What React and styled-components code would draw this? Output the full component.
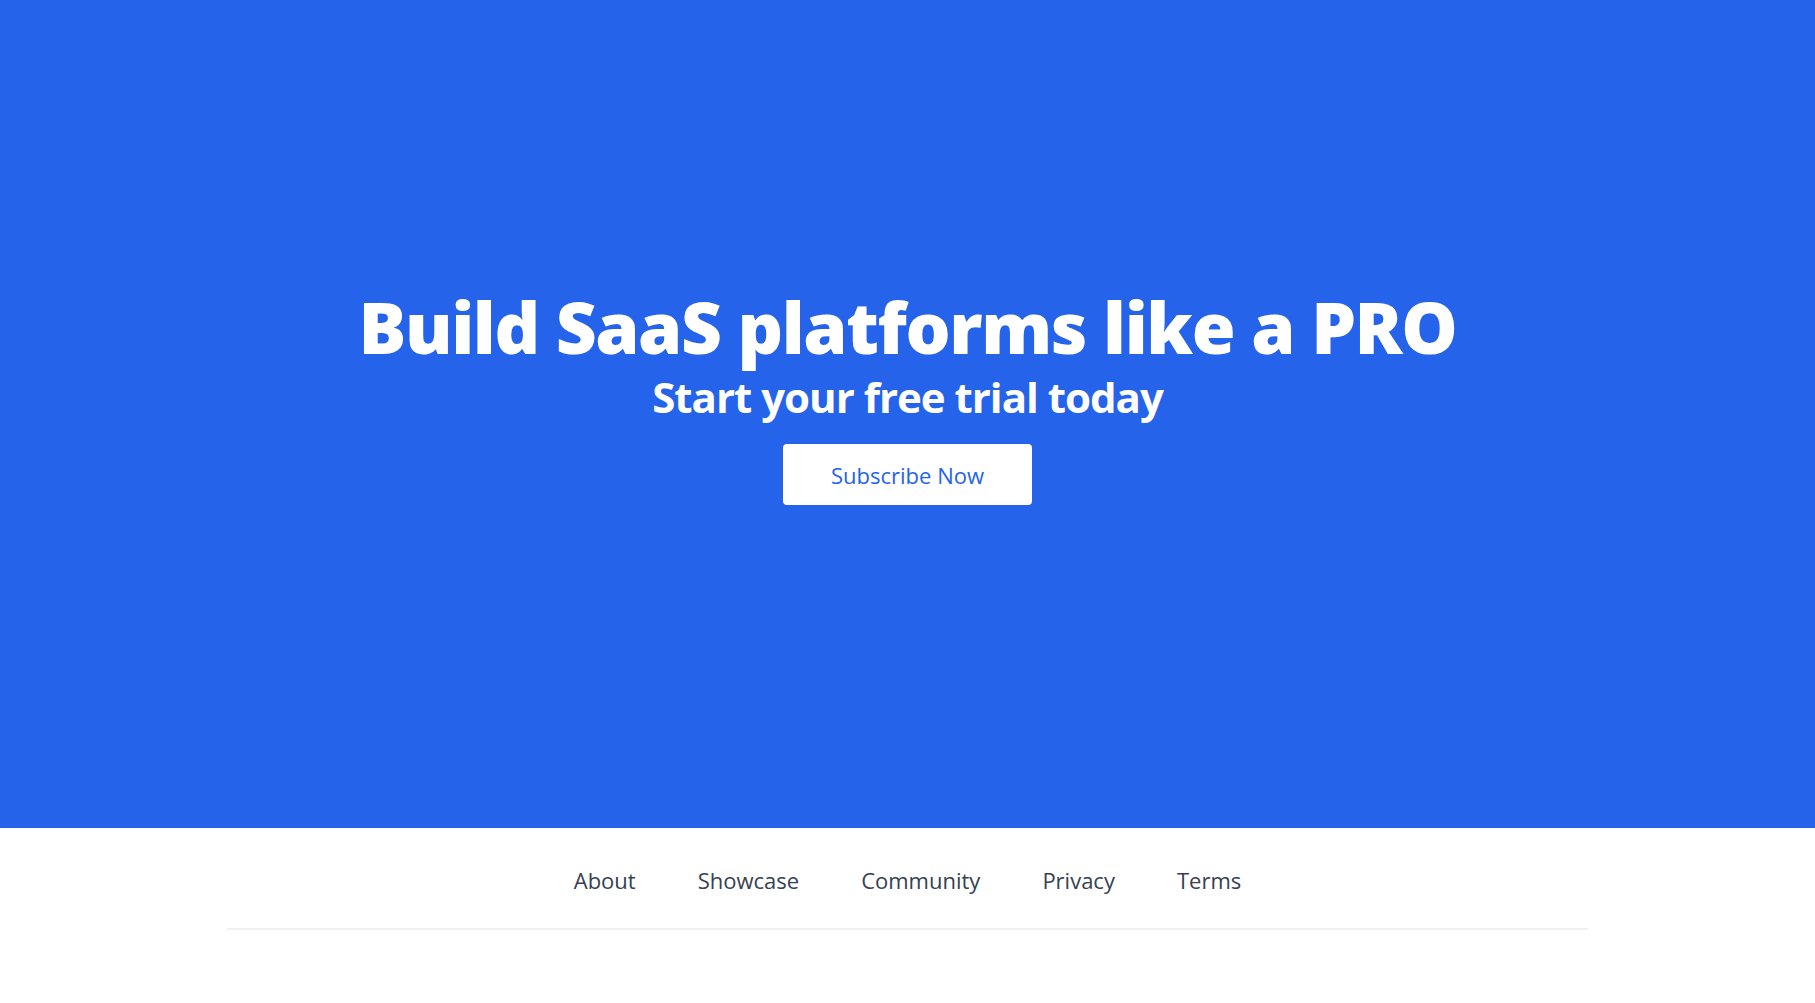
import React from "react";
import styled, { createGlobalStyle } from "styled-components";

const Global = createGlobalStyle`
  html, body { margin: 0; padding: 0; background: #ffffff; }
  body { font-family: "Open Sans", "Noto Sans", "Liberation Sans", sans-serif; }
  * { box-sizing: border-box; }
`;

const Page = styled.div`
  display: flex;
  flex-direction: column;
  min-height: 1003px;
`;

const Hero = styled.section`
  height: 828px;
  background: #2563eb;
  display: flex;
  flex-direction: column;
  align-items: center;
  justify-content: center;
  padding-bottom: 32px;
`;

const Title = styled.h1`
  margin: 0;
  font-size: 71px;
  line-height: 1;
  font-weight: 800;
  color: #ffffff;
  letter-spacing: -1.4px;
`;

const Subtitle = styled.h2`
  margin: 14px 0 0;
  font-size: 42px;
  line-height: 1;
  font-weight: 700;
  color: #ffffff;
  letter-spacing: -1px;
`;

const CTA = styled.button`
  margin-top: 26px;
  height: 61px;
  padding: 0 48px;
  border: none;
  border-radius: 4px;
  background: #ffffff;
  color: #2563eb;
  font-family: inherit;
  font-size: 22px;
  font-weight: 400;
  cursor: pointer;
`;

const Footer = styled.footer`
  background: #ffffff;
`;

const FooterInner = styled.div`
  width: 75%;
  margin: 0 auto;
  border-bottom: 2px solid #eef0f3;
  padding: 34px 0 30px;
`;

const Links = styled.nav`
  display: flex;
  justify-content: center;
  gap: 62px;
`;

const LinkItem = styled.a`
  font-size: 22px;
  line-height: 36px;
  color: #374151;
  text-decoration: none;
`;

export default function App() {
  return (
    <Page>
      <Global />
      <Hero>
        <Title>Build SaaS platforms like a PRO</Title>
        <Subtitle>Start your free trial today</Subtitle>
        <CTA>Subscribe Now</CTA>
      </Hero>
      <Footer>
        <FooterInner>
          <Links>
            {["About", "Showcase", "Community", "Privacy", "Terms"].map((l) => (
              <LinkItem key={l} href="#">{l}</LinkItem>
            ))}
          </Links>
        </FooterInner>
      </Footer>
    </Page>
  );
}
